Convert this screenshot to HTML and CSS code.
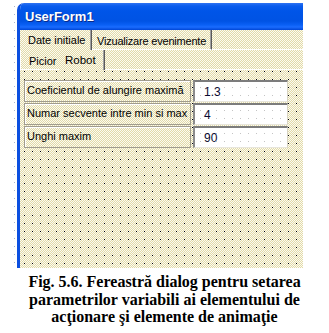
FILE: index.html
```html
<!DOCTYPE html>
<html lang="ro">
<head>
    <meta charset="UTF-8">
    <meta name="viewport" content="width=device-width, initial-scale=1.0">
    <title>UserForm1</title>
    <link rel="stylesheet" href="styles.css">
</head>
<body>
    <div class="shot">
        <div class="window">
            <div class="titlebar">
                <span class="title">UserForm1</span>
            </div>
            <div class="client">
                <div class="tabs outer-tabs">
                    <div class="tab active">Date initiale</div>
                    <div class="tab">Vizualizare evenimente</div>
                    <div class="tab-fill"></div>
                </div>
                <div class="tabs inner-tabs">
                    <div class="tab">Picior</div>
                    <div class="tab active">Robot</div>
                    <div class="tab-fill"></div>
                </div>
                <div class="page">
                    <div class="field">
                        <div class="label">Coeficientul de alungire maximă</div>
                        <div class="textbox">1.3</div>
                    </div>
                    <div class="field">
                        <div class="label">Numar secvente intre min si max</div>
                        <div class="textbox">4</div>
                    </div>
                    <div class="field">
                        <div class="label">Unghi maxim</div>
                        <div class="textbox">90</div>
                    </div>
                </div>
            </div>
        </div>
    </div>
    <p class="caption">Fig. 5.6. Fereastră dialog pentru setarea<br>parametrilor variabili ai elementului de<br>acţionare şi elemente de animaţie</p>
</body>
</html>
```

FILE: styles.css
```css
body {
    margin: 0;
    padding: 0;
    background-color: white;
    font-family: "Liberation Sans", Arial, sans-serif;
    font-size: 11px;
    color: black;
}
/* the design grid of the editor, left of the form */
.shot {
    height: 268px;
    padding-top: 3px;
    box-sizing: border-box;
    background-image: linear-gradient(#a9b6cc 1px, transparent 1px);
    background-size: 1px 8px;
    background-position: 14px 6px;
    background-repeat: repeat-y;
}
.window {
    margin-left: 17px;
    width: 286px;
    height: 265px;
    display: flex;
    flex-direction: column;
    border-left: 3px solid #0b4fe0;
    border-top-left-radius: 7px;
    box-sizing: border-box;
    overflow: hidden;
}
.titlebar {
    height: 27px;
    flex: none;
    display: flex;
    align-items: center;
    padding-left: 5px;
    background: linear-gradient(#2f73f2 0, #0a5ced 3px, #0055e8 8px, #0053e4 18px, #0a60f5 22px, #1a6cff 24px, #0046d6 27px);
}
.title {
    color: white;
    font-weight: bold;
    font-size: 13px;
    text-shadow: 1px 1px #0a2a8a;
}
/* dithered beige of the form surface */
.client, .label {
    background-image: conic-gradient(#e2daa8 25%, #fcfbf2 0 50%, #e2daa8 0 75%, #fcfbf2 0);
    background-size: 2px 2px;
}
.client {
    flex: 1;
    display: flex;
    flex-direction: column;
}
.tabs {
    display: flex;
    height: 20px;
    flex: none;
}
.tab {
    display: flex;
    align-items: center;
    border-bottom: 1px solid white;
    border-right: 1px solid #5a5a5a;
    box-shadow: inset -1px 0 #a0a0a0;
    padding-top: 3px;
    box-sizing: border-box;
}
.tab.active {
    border-bottom: none;
    padding-top: 0;
}
.tab-fill {
    flex: 1;
    border-bottom: 1px solid white;
}
.outer-tabs .tab:nth-child(1) {
    width: 72px;
    padding-left: 8px;
}
.outer-tabs .tab:nth-child(2) {
    width: 120px;
    padding-left: 5px;
    letter-spacing: -0.2px;
}
.inner-tabs .tab:nth-child(1) {
    width: 39px;
    padding-left: 8px;
    border-left: 1px solid white;
    border-right: none;
    box-shadow: none;
}
.inner-tabs .tab:nth-child(2) {
    width: 46px;
    padding-left: 6px;
    font-size: 11.5px;
}
.page {
    flex: 1;
    padding: 10px 0 0 4px;
    display: flex;
    flex-direction: column;
    gap: 1px;
    background-image: conic-gradient(at 1px 1px, transparent 75%, #000 0);
    background-size: 8px 8px;
    background-position: 4px 1px;
}
.field {
    display: flex;
    gap: 2px;
    height: 22px;
}
.label {
    width: 167px;
    border: 1px solid #a09c8e;
    box-shadow: inset 1px 1px #fff;
    padding: 3px 0 0 2px;
    box-sizing: border-box;
    white-space: nowrap;
    overflow: hidden;
}
.textbox {
    width: 95px;
    display: flex;
    align-items: center;
    padding-left: 9px;
    box-sizing: border-box;
    border-top: 2px solid #7c7c7c;
    border-left: 2px solid #8c8c8c;
    border-right: 1px solid #d8d4c4;
    border-bottom: 1px solid #e8e6dc;
    background-color: white;
    background-image: conic-gradient(at 1px 1px, transparent 75%, #c4c4c4 0);
    background-size: 8px 8px;
    background-position: 5px 5px;
    color: #0a0a30;
    font-size: 12px;
}
.caption {
    margin: 5px 0 0;
    text-align: center;
    font-family: "Liberation Serif", "Times New Roman", serif;
    font-weight: bold;
    font-size: 16px;
    line-height: 17.5px;
}
```
